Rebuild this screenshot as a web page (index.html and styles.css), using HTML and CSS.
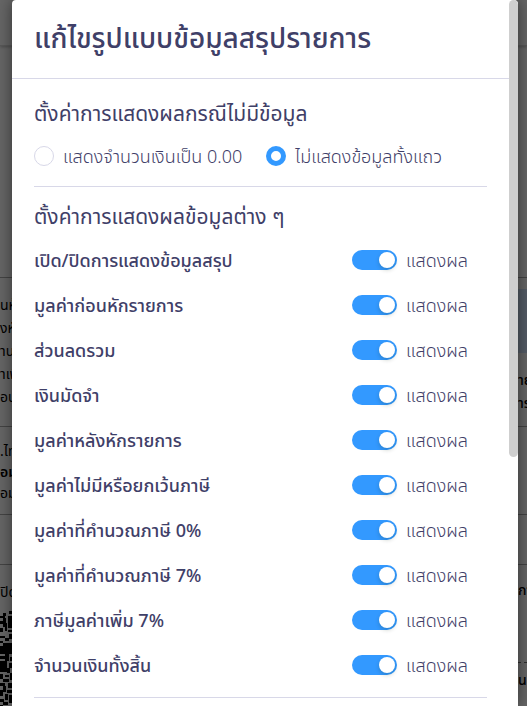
FILE: index.html
```
<!DOCTYPE html>
<html lang="th">
<head>
<meta charset="utf-8">
<meta name="viewport" content="width=device-width, initial-scale=1">
<title>แก้ไขรูปแบบข้อมูลสรุปรายการ</title>
<link rel="stylesheet" href="styles.css">
</head>
<body>
<div class="page" aria-hidden="true">
  <div class="page-header"></div>
  <div class="page-section preview"></div>
  <div class="page-section totals">
    <div class="lines"><span>นห้</span><span>งหั</span><span>านว</span><span>าเพิ่</span><span>อนท</span></div>
    <div class="amounts"><div class="highlight"></div><div class="lines strong"><span>าย</span><span>าร</span></div></div>
  </div>
  <div class="page-section notes"><div class="lines compact"><span>.ไท</span><b>อม</b><span>อม</span></div></div>
  <div class="page-section spacer"></div>
  <div class="page-section signature">
    <div><p>ปิด</p>
      <svg class="qr" width="14" height="96" viewBox="0 0 14 96" shape-rendering="crispEdges"><path d="M9 0h3v3H9zM3 2h3v3H3zM0 5h5v2H0zM8 5h4v12H8zM3 7h3v9H3zM0 10h3v3H0zM5 12h2v8H5zM0 17h3v4H0zM8 19h4v2H8zM0 25h5v2H0zM9 23h3v5H9zM5 27h4v3H5zM0 30h3v2H0zM3 32h9v11H3zM0 35h3v8H0zM5 43h4v7H5zM0 45h5v3H0zM10 46h2v4H10zM0 50h7v11H0zM9 52h3v5H9zM7 57h3v5H7zM0 63h3v5H0zM5 64h4v2H5zM10 62h2v7H10zM3 68h6v3H3zM0 72h5v3H0zM8 72h4v5H8zM3 75h3v6H3zM0 79h3v6H0zM7 79h5v3H7zM5 83h3v6H5zM9 84h3v8H9zM0 88h4v3H0zM3 91h5v3H3zM0 94h3v2H0z"/></svg>
    </div>
    <div class="signer"><span>กา</span><span class="date">นที่</span></div>
  </div>
</div>
<div class="backdrop"></div>
<main class="modal" role="dialog" aria-labelledby="title">
  <header class="modal-header"><h1 id="title">แก้ไขรูปแบบข้อมูลสรุปรายการ</h1></header>
  <form class="modal-body">
    <section class="group">
      <h2>ตั้งค่าการแสดงผลกรณีไม่มีข้อมูล</h2>
      <div class="radios">
        <label><input type="radio" name="empty"><span>แสดงจำนวนเงินเป็น 0.00</span></label>
        <label><input type="radio" name="empty" checked><span>ไม่แสดงข้อมูลทั้งแถว</span></label>
      </div>
    </section>
    <section class="group">
      <h2>ตั้งค่าการแสดงผลข้อมูลต่าง ๆ</h2>
      <div class="rows">
        <div class="row"><h3>เปิด/ปิดการแสดงข้อมูลสรุป</h3><label><input type="checkbox" role="switch" checked><span>แสดงผล</span></label></div>
        <div class="row"><h3>มูลค่าก่อนหักรายการ</h3><label><input type="checkbox" role="switch" checked><span>แสดงผล</span></label></div>
        <div class="row"><h3>ส่วนลดรวม</h3><label><input type="checkbox" role="switch" checked><span>แสดงผล</span></label></div>
        <div class="row"><h3>เงินมัดจำ</h3><label><input type="checkbox" role="switch" checked><span>แสดงผล</span></label></div>
        <div class="row"><h3>มูลค่าหลังหักรายการ</h3><label><input type="checkbox" role="switch" checked><span>แสดงผล</span></label></div>
        <div class="row"><h3>มูลค่าไม่มีหรือยกเว้นภาษี</h3><label><input type="checkbox" role="switch" checked><span>แสดงผล</span></label></div>
        <div class="row"><h3>มูลค่าที่คำนวณภาษี 0%</h3><label><input type="checkbox" role="switch" checked><span>แสดงผล</span></label></div>
        <div class="row"><h3>มูลค่าที่คำนวณภาษี 7%</h3><label><input type="checkbox" role="switch" checked><span>แสดงผล</span></label></div>
        <div class="row"><h3>ภาษีมูลค่าเพิ่ม 7%</h3><label><input type="checkbox" role="switch" checked><span>แสดงผล</span></label></div>
        <div class="row"><h3>จำนวนเงินทั้งสิ้น</h3><label><input type="checkbox" role="switch" checked><span>แสดงผล</span></label></div>
      </div>
    </section>
  </form>
  <div class="scrollbar"></div>
</main>
</body>
</html>
```
FILE: styles.css
```
* { box-sizing: border-box; }
body {
  margin: 0;
  height: 100vh;
  overflow: hidden;
  position: relative;
  color: #3f4068;
  font-family: "Noto Sans Thai", "Noto Sans", "Open Sans", sans-serif;
  font-size: 18px;
}
h1, h2, h3, p { margin: 0; font-weight: 500; }

.page { background: #fff; color: #000; font-size: 14px; }
.page-header { height: 46px; border-bottom: 1px solid #ddd; box-shadow: 0 1px 3px #bbb; }
.page-section {
  display: flex;
  justify-content: space-between;
  border-bottom: 1px solid #aaa;
  overflow: hidden;
}
.preview { height: 232px; }
.totals { height: 149px; }
.notes { height: 88px; }
.spacer { height: 50px; }
.signature { height: 142px; border: 0; }
.lines { display: flex; flex-direction: column; line-height: 23px; white-space: nowrap; }
.totals > .lines { padding-top: 16px; }
.strong { font-weight: 500; }
.compact { padding-top: 14px; line-height: 21px; }
.compact b { font-weight: 600; }
.amounts { width: 9px; padding-top: 11px; }
.highlight { height: 64px; margin-bottom: 16px; background: #d3e6ff; }
.signature p { height: 46px; padding-top: 18px; line-height: 20px; font-weight: 400; }
.qr { display: block; }
.signer { width: 9px; padding-top: 16px; white-space: nowrap; line-height: 20px; font-weight: 500; }
.date { display: block; margin-top: 61px; padding-top: 8px; border-top: 1px dashed #777; }

.backdrop { position: absolute; inset: 0; background: rgba(0, 0, 0, .6); }

.modal {
  position: absolute;
  inset: 0 9px 0 12px;
  overflow: hidden;
  background: #fff;
  border-radius: 4px 4px 0 0;
  box-shadow: 0 0 16px rgba(0, 0, 0, .5);
}
.modal-header {
  margin-right: 9px;
  padding: 20px 22px 18px;
  border-bottom: 1px solid #d8d8e8;
}
h1 { font-size: 28px; line-height: 40px; white-space: nowrap; }
.modal-body { padding: 20px 31px 0 22px; }
.group { border-bottom: 1px solid #d8d8e8; margin-bottom: 15px; }
h2 { padding-top: 2px; font-size: 21px; line-height: 28px; font-weight: 400; white-space: nowrap; }
.radios { display: flex; gap: 24px; padding: 12px 0 15px; }
label { display: flex; align-items: center; gap: 9px; white-space: nowrap; font-weight: 300; }
label span, h3 { padding-top: 3px; line-height: 27px; }
input { appearance: none; flex: none; margin: 0; }
input[type="radio"] {
  width: 20px;
  height: 20px;
  border: 1px solid #d8d8e8;
  border-radius: 50%;
}
input[type="radio"]:checked { border: 5px solid #39f; }
input[type="checkbox"] {
  width: 45px;
  height: 20px;
  padding: 2px;
  display: flex;
  border-radius: 10px;
  background: #bbb;
}
input[type="checkbox"]::before {
  content: "";
  width: 16px;
  height: 16px;
  border-radius: 50%;
  background: #fff;
  box-shadow: 0 2px 4px rgba(0, 35, 11, .2);
}
input[type="checkbox"]:checked { justify-content: flex-end; background: #39f; }
.rows { padding: 5px 0 10px; }
.row {
  display: grid;
  grid-template-columns: 1fr 135px;
  align-items: center;
  height: 45px;
}
h3 { font-size: 18px; white-space: nowrap; }
.scrollbar {
  position: absolute;
  top: 0;
  right: 0;
  width: 9px;
  height: 457px;
  border-radius: 5px;
  background: #cfcfcf;
}
```
